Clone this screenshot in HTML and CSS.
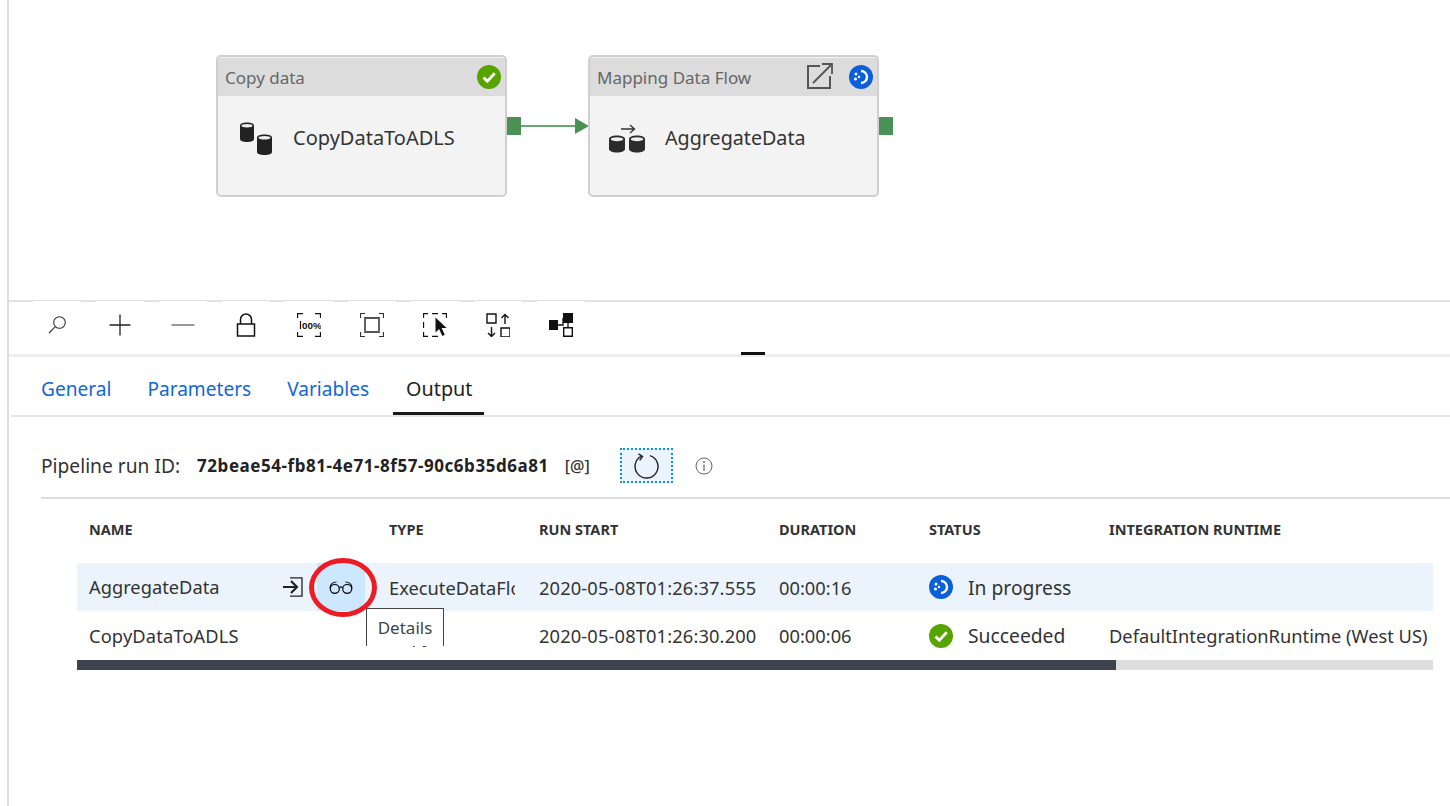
FILE: index.html
```html
<!DOCTYPE html>
<html lang="en">
<head>
    <meta charset="UTF-8">
    <meta name="viewport" content="width=device-width, initial-scale=1.0">
    <title>Pipeline run output</title>
    <link rel="stylesheet" href="styles.css">
</head>
<body>
    <div class="frame">
        <!-- pipeline canvas -->
        <section class="canvas">
            <div class="node node-copy">
                <div class="node-head">
                    <span>Copy data</span>
                    <svg class="status-icon" viewBox="0 0 24 24"><circle cx="12" cy="12" r="12" fill="#57a300"/><path d="M6.500 12.500l3.800 3.800 7.400-8" fill="none" stroke="#fff" stroke-width="2.800"/></svg>
                </div>
                <div class="node-body">
                    <svg class="node-icon" viewBox="0 0 34 34"><path d="M1 3.500C1 1.800 4 .5 8 .5S15 1.800 15 3.500V17c0 1.700-3 3-7 3S1 18.700 1 17z" fill="#222"/><ellipse cx="8" cy="3.700" rx="5.500" ry="1.700" fill="#eee"/><path d="M18 15.500c0-1.700 3-3 7.500-3s7.500 1.300 7.500 3V30c0 1.700-3 3-7.500 3S18 31.700 18 30z" fill="#222"/><ellipse cx="25.500" cy="15.700" rx="6" ry="1.700" fill="#eee"/></svg>
                    <span class="node-name">CopyDataToADLS</span>
                </div>
                <span class="port"></span>
            </div>
            <div class="link"></div>
            <div class="node node-flow">
                <div class="node-head">
                    <span>Mapping Data Flow</span>
                    <svg class="open-icon" viewBox="0 0 26 26"><path d="M13 3H1v22h22V13" fill="none" stroke="#555" stroke-width="2"/><path d="M6 20L24.500 1.500M15 1h10v10" fill="none" stroke="#555" stroke-width="1.800"/></svg>
                    <svg class="status-icon" viewBox="0 0 24 24"><circle cx="12" cy="12" r="12" fill="#0b5fd8"/><path d="M12 6a6 6 0 0 1 0 12" fill="none" stroke="#fff" stroke-width="2.400"/><circle cx="7" cy="9" r="1.500" fill="#fff"/><circle cx="6.500" cy="14" r="1.500" fill="#fff"/><circle cx="10" cy="12" r="1.200" fill="#fff"/></svg>
                </div>
                <div class="node-body">
                    <svg class="node-icon flow-icon" viewBox="0 0 36 30"><path d="M12 5h13M21 1l4.500 4L21 9" fill="none" stroke="#333" stroke-width="1.300"/><path d="M0 15c0-2 3.500-3.500 8-3.500s8 1.500 8 3.500v10c0 2-3.500 3.500-8 3.500S0 27 0 25z" fill="#2b2b2b"/><ellipse cx="8" cy="15.200" rx="6.300" ry="2" fill="#eee"/><path d="M20 15c0-2 3.500-3.500 8-3.500s8 1.500 8 3.500v10c0 2-3.500 3.500-8 3.500S20 27 20 25z" fill="#2b2b2b"/><ellipse cx="28" cy="15.200" rx="6.300" ry="2" fill="#eee"/></svg>
                    <span class="node-name">AggregateData</span>
                </div>
                <span class="port"></span>
            </div>
        </section>

        <!-- canvas toolbar -->
        <div class="toolbar">
            <button class="tool"><svg viewBox="0 0 24 24"><circle cx="14.500" cy="9.500" r="5.800" fill="none" stroke="#333" stroke-width="1.100"/><path d="M10.300 13.700L4 20" stroke="#333" stroke-width="1.100"/></svg></button>
            <button class="tool"><svg viewBox="0 0 24 24"><path d="M1.500 12h21M12 1.500v21" stroke="#222" stroke-width="1.300"/></svg></button>
            <button class="tool"><svg viewBox="0 0 24 24"><path d="M.5 12h23" stroke="#444" stroke-width="1.100"/></svg></button>
            <button class="tool"><svg viewBox="0 0 24 24"><path d="M2.500 11h17v12h-17zM5.500 11V6.500a5.500 5.500 0 0 1 11 0V11" fill="none" stroke="#111" stroke-width="1.500" transform="translate(1 0)"/></svg></button>
            <button class="tool">
                <svg viewBox="0 0 24 24"><path d="M.5 5V.500H6M18 .500h5.500V5M.5 19v4.500H6M18 23.500h5.500V19" fill="none" stroke="#111" stroke-width="1.300"/><path d="M3.500 8v8" stroke="#111" stroke-width="1.200"/><text x="5" y="16" class="tool-text">00%</text></svg>
            </button>
            <button class="tool"><svg viewBox="0 0 24 24"><path d="M.5 5V.500H5M19 .500h4.500V5M.5 19v4.500H5M19 23.500h4.500V19" fill="none" stroke="#333" stroke-width="1.200"/><path d="M5 5h14v14H5z" fill="none" stroke="#555" stroke-width="1.800"/></svg></button>
            <button class="tool"><svg viewBox="0 0 24 24"><path d="M.5 5V.500H5M9 .500h6M.5 9v6M.5 19v4.500H5M9 23.500h6M19 .500h4.500V5" fill="none" stroke="#111" stroke-width="1.300"/><path d="M12.500 4.500v15l3.600-3.500 3.200 7 2.500-1.200-3.200-6.800h5z" fill="#111"/></svg></button>
            <button class="tool"><svg viewBox="0 0 24 24"><path d="M1 1h9v9H1zM15 15h9v9h-9z" fill="none" stroke="#111" stroke-width="1.400"/><path d="M19 11V1.500M15.500 5L19 1.500 22.500 5M5.500 14v9.500M2 20l3.500 3.500L9 20" fill="none" stroke="#111" stroke-width="1.400"/></svg></button>
            <button class="tool"><svg viewBox="0 0 24 24"><path d="M0 7h9v10H0zM14 0h10v10H14z" fill="#111"/><path d="M9 12h5V5M19 10v5" fill="none" stroke="#111" stroke-width="1.300"/><path d="M14.700 14.700h8.600v8.600h-8.600z" fill="none" stroke="#111" stroke-width="1.400"/></svg></button>
        </div>

        <div class="splitter"><span class="splitter-grip"></span></div>

        <nav class="tabs">
            <a class="tab">General</a>
            <a class="tab">Parameters</a>
            <a class="tab">Variables</a>
            <a class="tab active">Output</a>
        </nav>

        <div class="run-row">
            <span class="run-label">Pipeline run ID:</span>
            <span class="run-id">72beae54-fb81-4e71-8f57-90c6b35d6a81</span>
            <span class="run-copy">[@]</span>
            <button class="refresh"><svg viewBox="0 0 26 26"><path d="M8.500 3.200A11.500 11.500 0 1 0 17 2.600" fill="none" stroke="#222" stroke-width="1.400" /><path d="M5.500 .8l4 2.600-2.800 4" fill="none" stroke="#222" stroke-width="1.400"/></svg></button>
            <svg class="info" viewBox="0 0 18 18"><circle cx="9" cy="9" r="8" fill="none" stroke="#666" stroke-width="1"/><path d="M9 7.500V14" stroke="#666" stroke-width="1.200"/><circle cx="9" cy="5" r=".9" fill="#666"/></svg>
        </div>

        <div class="table">
            <div class="row head">
                <span>NAME</span><span>TYPE</span><span>RUN START</span><span>DURATION</span><span>STATUS</span><span>INTEGRATION RUNTIME</span>
            </div>
            <div class="row selected">
                <div class="name-cell">
                    <span>AggregateData</span>
                    <svg class="enter-icon" viewBox="0 0 20 20"><path d="M7 .8h12v18.400H7" fill="none" stroke="#222" stroke-width="1.300"/><path d="M0 10h13M8 4l6 6-6 6" fill="none" stroke="#222" stroke-width="2.200"/></svg>
                    <span class="details-btn">
                        <svg viewBox="0 0 24 13"><circle cx="5.800" cy="7.800" r="4.500" fill="none" stroke="#111" stroke-width="1.300"/><circle cx="18.200" cy="7.800" r="4.500" fill="none" stroke="#111" stroke-width="1.300"/><path d="M10.300 6.800c1-1 2.400-1 3.400 0M1 7C1.300 3.500 3.500 1 7.500 1M23 7C22.700 3.500 20.500 1 16.500 1" fill="none" stroke="#111" stroke-width="1.200"/></svg>
                    </span>
                </div>
                <span class="type-cell">ExecuteDataFlow</span>
                <span class="date-cell">2020-05-08T01:26:37.555</span>
                <span>00:00:16</span>
                <span class="status-cell">
                    <svg class="status-icon" viewBox="0 0 24 24"><circle cx="12" cy="12" r="12" fill="#0b5fd8"/><path d="M12 6a6 6 0 0 1 0 12" fill="none" stroke="#fff" stroke-width="2.400"/><circle cx="7" cy="9" r="1.500" fill="#fff"/><circle cx="6.500" cy="14" r="1.500" fill="#fff"/><circle cx="10" cy="12" r="1.200" fill="#fff"/></svg>
                    In progress
                </span>
                <span></span>
            </div>
            <div class="row">
                <span class="date-cell">CopyDataToADLS</span>
                <span class="type-cell">Copy</span>
                <span class="date-cell">2020-05-08T01:26:30.200</span>
                <span>00:00:06</span>
                <span class="status-cell">
                    <svg class="status-icon" viewBox="0 0 24 24"><circle cx="12" cy="12" r="12" fill="#57a300"/><path d="M6.500 12.500l3.800 3.800 7.400-8" fill="none" stroke="#fff" stroke-width="2.800"/></svg>
                    Succeeded
                </span>
                <span>DefaultIntegrationRuntime (West US)</span>
            </div>
            <div class="scrollbar"><span class="scrollbar-thumb"></span></div>

            <span class="tooltip">Details</span>
            <span class="callout"></span>
        </div>
    </div>
</body>
</html>
```

FILE: styles.css
```css
body {
    font-family: "Noto Sans", Arial, sans-serif;
    color: #222;
    background-color: #fff;
    margin: 0;
    padding: 0;
}

button {
    font: inherit;
    padding: 0;
    border: none;
    background: none;
}

.frame {
    margin-left: 7px;
    border-left: 2px solid #ddd;
    height: 806px;
    overflow: hidden;
}

.canvas {
    position: relative;
    height: 300px;
    border-bottom: 2px solid #e2e2e2;
}

/* the nodes sit on a free canvas */
.node {
    position: absolute;
    top: 55px;
    box-sizing: border-box;
    width: 291px;
    height: 142px;
    border: 2px solid #cfcfcf;
    border-radius: 5px;
    background-color: #f3f3f3;
}

.node-copy {
    left: 207px;
}

.node-flow {
    left: 579px;
}

.node-head {
    display: flex;
    align-items: center;
    height: 38px;
    margin-top: 1px;
    padding: 0 4px 0 7px;
    background-color: #dcdcdc;
    color: #666;
    font-size: 17px;
}

.node-head span {
    flex: 1;
}

.status-icon {
    width: 24px;
    height: 24px;
    flex: none;
}

.open-icon {
    width: 26px;
    height: 26px;
    margin-right: 16px;
    margin-top: -3px;
}

.node-body {
    display: flex;
    align-items: center;
    height: 84px;
    padding-left: 21px;
    font-size: 20px;
    color: #333;
}

.node-icon {
    width: 34px;
    height: 34px;
    margin-right: 20px;
    margin-top: 1px;
}

.node-name {
    margin-top: -2px;
}

.flow-icon {
    width: 36px;
    height: 30px;
    margin-right: 20px;
    margin-left: -2px;
}

.node-flow .node-name {
    font-size: 19.700px;
}

.port {
    position: absolute;
    right: -16px;
    top: 60px;
    width: 14px;
    height: 18px;
    background-color: #4a9153;
}

.link {
    position: absolute;
    left: 512px;
    top: 125px;
    width: 55px;
    height: 2px;
    background-color: #6aa873;
}

.link::after {
    content: "";
    position: absolute;
    left: 54px;
    top: -7px;
    border-left: 14px solid #4a9153;
    border-top: 8px solid transparent;
    border-bottom: 8px solid transparent;
}

.toolbar {
    position: relative;
    display: flex;
    gap: 15px;
    margin-top: -1px;
    padding-left: 24px;
    height: 53px;
}

.tool {
    display: flex;
    align-items: center;
    justify-content: center;
    width: 48px;
    height: 47px;
    background-color: #fff;
}

.tool svg {
    width: 24px;
    height: 24px;
}

.tool-text {
    font-size: 9.800px;
    font-weight: 700;
    fill: #111;
    font-family: "Liberation Sans", sans-serif;
}

.splitter {
    position: relative;
    height: 3px;
    background-color: #eee;
}

.splitter-grip {
    position: absolute;
    left: 732px;
    top: -2px;
    width: 24px;
    height: 3px;
    background-color: #111;
}

.tabs {
    display: flex;
    gap: 36px;
    margin-left: 2px;
    padding-left: 30px;
    height: 58px;
    border-bottom: 2px solid #e4e4e4;
    font-size: 19.100px;
}

.tab {
    line-height: 64px;
    color: #1167d8;
}

.tab.active {
    box-sizing: border-box;
    color: #222;
    font-size: 19.800px;
    padding: 0 12px 0 13px;
    margin-left: -12px;
    height: 58px;
    border-bottom: 3px solid #1a1a1a;
}

.run-row {
    display: flex;
    align-items: center;
    box-sizing: border-box;
    height: 82px;
    padding-top: 17px;
    margin-left: 32px;
    border-bottom: 2px solid #ddd;
    font-size: 19.200px;
}

.run-label {
    margin-right: 17px;
    color: #333;
}

.run-id {
    font-size: 17px;
    letter-spacing: .55px;
    font-weight: 700;
    color: #222;
}

.run-copy {
    margin-left: 16px;
    font-size: 16px;
    font-weight: 500;
    color: #333;
}

.refresh {
    display: flex;
    align-items: center;
    justify-content: center;
    width: 53px;
    height: 35px;
    box-sizing: border-box;
    margin-left: 30px;
    border: 2px dotted #0a93e6;
    background-color: #eaf4fe;
}

.refresh svg {
    width: 26px;
    height: 26px;
}

.info {
    width: 18px;
    height: 18px;
    margin-left: 22px;
}

.table {
    position: relative;
    margin-left: 68px;
    margin-right: 17px;
    font-size: 18.300px;
}

.row {
    display: grid;
    grid-template-columns: 300px 150px 240px 150px 180px 1fr;
    align-items: center;
    box-sizing: border-box;
    height: 49px;
    padding-left: 12px;
    white-space: nowrap;
    color: #333;
}

.row.head {
    height: 64px;
    padding-bottom: 5px;
    font-size: 14.500px;
    font-weight: 700;
    color: #333;
}

.row.selected {
    background-color: #ebf4fd;
    height: 48px;
    padding-bottom: 2px;
}

.date-cell {
    letter-spacing: .13px;
}

.name-cell {
    display: flex;
    align-items: center;
    align-self: start;
    height: 48px;
}

.name-cell span:first-child {
    width: 194px;
    margin-bottom: 1px;
}

.enter-icon {
    width: 20px;
    height: 20px;
}

.details-btn {
    display: flex;
    align-items: center;
    justify-content: center;
    width: 48px;
    height: 48px;
    margin-left: 14px;
    background-color: #cce7fe;
}

.details-btn svg {
    width: 24px;
    height: 13px;
}

.type-cell {
    width: 126px;
    overflow: hidden;
}

.status-cell {
    display: flex;
    align-items: center;
    gap: 15px;
    font-size: 19.300px;
}

.scrollbar {
    height: 10px;
    background-color: #ddd;
}

.scrollbar-thumb {
    display: block;
    width: 1039px;
    height: 10px;
    background-color: #3d4450;
}

.tooltip {
    position: absolute;
    left: 289px;
    top: 109px;
    box-sizing: border-box;
    width: 78px;
    height: 38px;
    border: 1px solid #444;
    border-bottom: none;
    background-color: #fff;
    text-align: center;
    line-height: 37px;
    font-size: 17px;
    color: #444;
}

.callout {
    position: absolute;
    left: 232px;
    top: 59px;
    box-sizing: border-box;
    width: 68px;
    height: 59px;
    border: 5.500px solid #ed1c24;
    border-radius: 50%;
}
```
